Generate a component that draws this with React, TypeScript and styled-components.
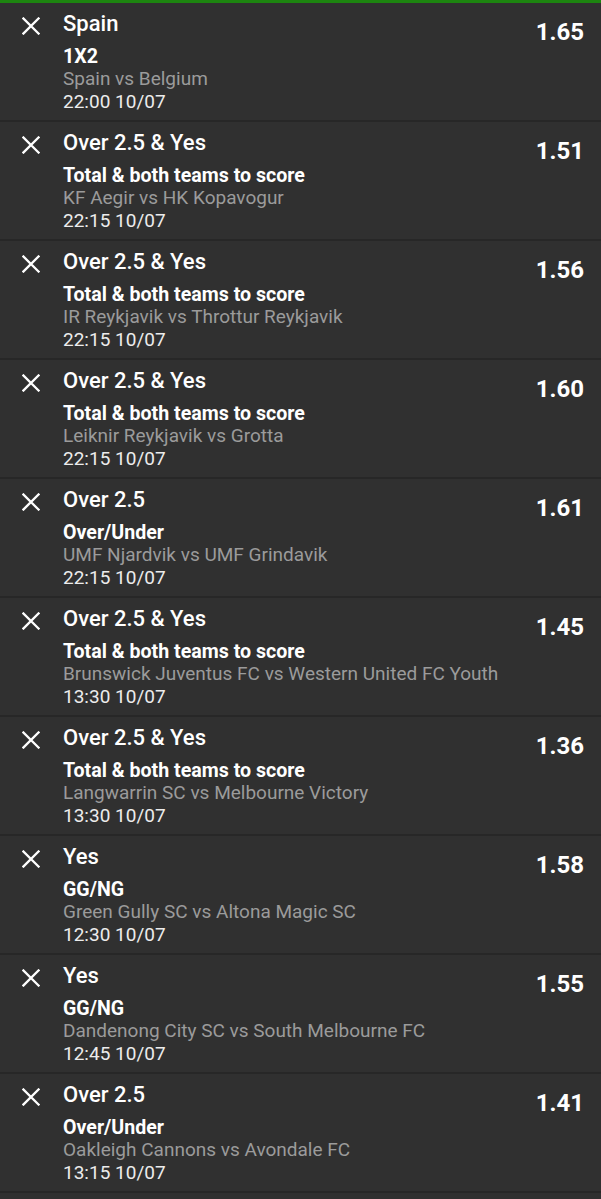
import React from "react";
import styled, { createGlobalStyle } from "styled-components";

/* Global */
const GlobalStyle = createGlobalStyle`
  html, body {
    margin: 0;
    padding: 0;
    background-color: #303030;
  }
  body {
    font-family: Roboto, "Noto Sans", sans-serif;
    -webkit-font-smoothing: antialiased;
  }
`;

/* Styles */
const Slip = styled.div`
  display: flex;
  flex-direction: column;
  width: 601px;
  min-height: 1199px;
  background-color: #303030;
  border-top: 3px solid #1d8510;
  box-sizing: border-box;
`;

const Selection = styled.div`
  display: flex;
  align-items: flex-start;
  height: 119px;
  box-sizing: border-box;
  border-bottom: 2px solid #272727;
  padding: 0 17px 0 22px;
`;

const RemoveButton = styled.button`
  flex: none;
  width: 18px;
  height: 18px;
  margin-top: 14px;
  margin-right: 23px;
  padding: 0;
  border: none;
  background: transparent;
  cursor: pointer;

  & svg {
    display: block;
  }
`;

const Details = styled.div`
  flex: 1;
  display: flex;
  flex-direction: column;
  padding-top: 8px;
  min-width: 0;
`;

const Pick = styled.div`
  color: #ffffff;
  font-size: 22px;
  font-weight: 500;
  line-height: 26px;
`;

const Market = styled.div`
  margin-top: 9px;
  color: #ffffff;
  font-size: 19.6px;
  font-weight: 700;
  line-height: 22px;
`;

const Fixture = styled.div`
  color: #9b9b9b;
  font-size: 19px;
  line-height: 21px;
  white-space: nowrap;
`;

const Kickoff = styled.div`
  margin-top: 2px;
  color: #ececec;
  font-size: 19px;
  line-height: 22px;
`;

const Odds = styled.div`
  flex: none;
  padding-top: 15px;
  color: #ffffff;
  font-size: 24px;
  font-weight: 700;
  line-height: 28px;
`;

/* Data */
interface IBet {
  pick: string;
  market: string;
  fixture: string;
  kickoff: string;
  odds: string;
}

const bets: IBet[] = [
  { pick: "Spain", market: "1X2", fixture: "Spain vs Belgium", kickoff: "22:00 10/07", odds: "1.65" },
  { pick: "Over 2.5 & Yes", market: "Total & both teams to score", fixture: "KF Aegir vs HK Kopavogur", kickoff: "22:15 10/07", odds: "1.51" },
  { pick: "Over 2.5 & Yes", market: "Total & both teams to score", fixture: "IR Reykjavik vs Throttur Reykjavik", kickoff: "22:15 10/07", odds: "1.56" },
  { pick: "Over 2.5 & Yes", market: "Total & both teams to score", fixture: "Leiknir Reykjavik vs Grotta", kickoff: "22:15 10/07", odds: "1.60" },
  { pick: "Over 2.5", market: "Over/Under", fixture: "UMF Njardvik vs UMF Grindavik", kickoff: "22:15 10/07", odds: "1.61" },
  { pick: "Over 2.5 & Yes", market: "Total & both teams to score", fixture: "Brunswick Juventus FC vs Western United FC Youth", kickoff: "13:30 10/07", odds: "1.45" },
  { pick: "Over 2.5 & Yes", market: "Total & both teams to score", fixture: "Langwarrin SC vs Melbourne Victory", kickoff: "13:30 10/07", odds: "1.36" },
  { pick: "Yes", market: "GG/NG", fixture: "Green Gully SC vs Altona Magic SC", kickoff: "12:30 10/07", odds: "1.58" },
  { pick: "Yes", market: "GG/NG", fixture: "Dandenong City SC vs South Melbourne FC", kickoff: "12:45 10/07", odds: "1.55" },
  { pick: "Over 2.5", market: "Over/Under", fixture: "Oakleigh Cannons vs Avondale FC", kickoff: "13:15 10/07", odds: "1.41" },
];

const CloseIcon = () => (
  <svg width="18" height="18" viewBox="0 0 18 18">
    <path d="M1.5 1.5 L16.5 16.5 M16.5 1.5 L1.5 16.5" stroke="#ffffff" strokeWidth="2.3" strokeLinecap="square" />
  </svg>
);

/* Main Component */
export default function App() {
  return (
    <>
      <GlobalStyle />
      <Slip>
        {bets.map((bet, i) => (
          <Selection key={i}>
            <RemoveButton aria-label="Remove selection">
              <CloseIcon />
            </RemoveButton>
            <Details>
              <Pick>{bet.pick}</Pick>
              <Market>{bet.market}</Market>
              <Fixture>{bet.fixture}</Fixture>
              <Kickoff>{bet.kickoff}</Kickoff>
            </Details>
            <Odds>{bet.odds}</Odds>
          </Selection>
        ))}
      </Slip>
    </>
  );
}
